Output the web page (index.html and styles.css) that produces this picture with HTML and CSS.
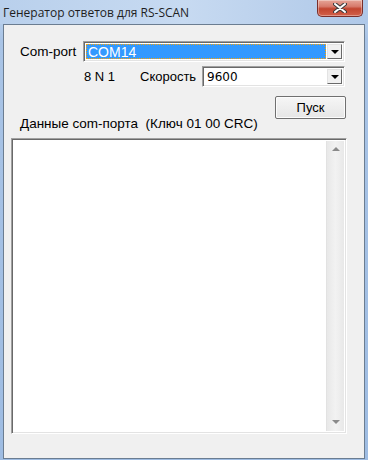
FILE: index.html
```html
<!DOCTYPE html>
<html lang="ru">
<head>
  <meta charset="UTF-8">
  <title>Генератор ответов для RS-SCAN</title>
  <link rel="stylesheet" href="styles.css">
</head>
<body>
  <div class="window">
    <div class="titlebar">
      <span class="title">Генератор ответов для RS-SCAN</span>
      <button class="close-btn">
        <svg width="14" height="10" viewBox="0 0 14 10">
          <path d="M2 1 L12 9 M12 1 L2 9" stroke="#3b3b3b" stroke-width="4" stroke-linecap="round"/>
          <path d="M2 1 L12 9 M12 1 L2 9" stroke="#fff" stroke-width="2" stroke-linecap="round"/>
        </svg>
      </button>
    </div>

    <div class="client">
      <div class="row row-port">
        <span class="label">Com-port</span>
        <div class="combo combo-port">
          <div class="combo-value selected"><span>COM14</span></div>
          <div class="combo-arrow"><span class="tri"></span></div>
        </div>
      </div>

      <div class="row row-speed">
        <span class="parity">8 N 1</span>
        <span class="speed-label">Скорость</span>
        <div class="combo combo-speed">
          <div class="combo-value"><span>9600</span></div>
          <div class="combo-arrow"><span class="tri"></span></div>
        </div>
      </div>

      <div class="row row-btn">
        <button class="push">Пуск</button>
      </div>

      <div class="data-label">Данные com-порта&nbsp; (Ключ 01 00 CRC)</div>

      <div class="memo">
        <div class="memo-text"></div>
        <div class="scrollbar">
          <span class="sb-up"></span>
          <span class="sb-down"></span>
        </div>
      </div>
    </div>
  </div>
</body>
</html>
```

FILE: styles.css
```css
body {
  margin: 0;
  width: 368px;
  height: 460px;
  overflow: hidden;
  font-family: 'Liberation Sans', Arial, sans-serif;
}
.window {
  width: 368px;
  height: 460px;
  background: linear-gradient(to bottom, #c2d7ef 0px, #a9c4e6 40px, #9ebce2 460px);
  display: flex;
  flex-direction: column;
}
.titlebar {
  height: 24px;
  display: flex;
  align-items: flex-start;
  justify-content: space-between;
  background: linear-gradient(to right, #b9d0ec, #c7daf1 50%, #afc8e8);
}
.title {
  font-family: 'Open Sans', 'Noto Sans', sans-serif;
  font-size: 12px;
  color: #1e1e1e;
  margin: 4px 0 0 3px;
}
.close-btn {
  width: 46px;
  height: 17px;
  margin-right: 5px;
  padding: 0;
  border: 1px solid #7a2e2a;
  border-top: none;
  border-radius: 0 0 5px 5px;
  background: linear-gradient(to bottom, #e6a597 0%, #d77b6c 40%, #c2452f 55%, #d2604a 100%);
  box-shadow: inset 0 0 0 1px rgba(255,255,255,0.35);
  display: flex;
  align-items: center;
  justify-content: center;
}
.client {
  margin: 0 3px 1px 3px;
  flex: 1;
  background: #f0f0f0;
  border: 1px solid #6b7d91;
  padding: 16px 0 0 0;
  font-size: 13px;
  color: #000;
}
.row {
  display: flex;
  align-items: center;
}
.label {
  width: 63px;
  padding-left: 16px;
  font-size: 13.5px;
}
.combo {
  display: flex;
  height: 21px;
  box-sizing: border-box;
  background: #fff;
  border-top: 1px solid #a0a0a0;
  border-left: 1px solid #a0a0a0;
  border-right: 1px solid #fff;
  border-bottom: 1px solid #fff;
  box-shadow: inset 1px 1px 0 #696969, inset -1px -1px 0 #e3e3e3;
  padding: 2px;
}
.combo-port {
  width: 262px;
}
.combo-speed {
  width: 143px;
}
.combo-value {
  flex: 1;
  display: flex;
  align-items: center;
  font-family: 'DejaVu Sans', sans-serif;
  font-size: 12px;
  padding-left: 2px;
  margin-right: 1px;
}
.combo-value.selected {
  background: #3399ff;
  color: #fff;
  outline: 1px dotted #ffa500;
  outline-offset: -1px;
  font-family: 'Liberation Sans', Arial, sans-serif;
  font-size: 14px;
}
.combo-arrow {
  width: 15px;
  background: #f0f0f0;
  box-sizing: border-box;
  border-top: 1px solid #e3e3e3;
  border-left: 1px solid #e3e3e3;
  border-right: 1px solid #696969;
  border-bottom: 1px solid #696969;
  display: flex;
  align-items: center;
  justify-content: center;
}
.tri {
  width: 0;
  height: 0;
  border-left: 4px solid transparent;
  border-right: 4px solid transparent;
  border-top: 4px solid #000;
  margin-top: 1px;
}
.row-port {
  height: 21px;
}
.row-speed {
  margin-top: 4px;
  height: 21px;
}
.parity {
  padding-left: 80px;
  width: 56px;
}
.speed-label {
  width: 62px;
}
.row-btn {
  justify-content: flex-end;
  margin-top: 9px;
  padding-right: 18px;
}
.push {
  width: 71px;
  height: 23px;
  font-family: 'Liberation Sans', Arial, sans-serif;
  font-size: 13px;
  background: linear-gradient(to bottom, #f6f6f6, #e6e6e6);
  border: 1px solid #707070;
  border-radius: 2px;
  box-shadow: inset 0 0 0 1px #fcfcfc;
  padding: 0;
  color: #000;
}
.data-label {
  padding-left: 16px;
  margin-top: -2px;
  line-height: 14px;
  font-size: 13.5px;
}
.memo {
  margin: 7px 0 0 7px;
  width: 336px;
  height: 296px;
  box-sizing: border-box;
  background: #fff;
  border-top: 1px solid #a0a0a0;
  border-left: 1px solid #a0a0a0;
  border-right: 1px solid #fff;
  border-bottom: 1px solid #fff;
  box-shadow: inset 1px 1px 0 #696969, inset -1px -1px 0 #e3e3e3;
  display: flex;
  padding: 2px 2px 2px 2px;
}
.memo-text {
  flex: 1;
}
.scrollbar {
  width: 17px;
  background: linear-gradient(to right, #e8e8e8, #f2f2f2 50%, #e8e8e8);
  border-left: 1px solid #e2e2e2;
  display: flex;
  flex-direction: column;
  justify-content: space-between;
  align-items: center;
  padding: 6px 0 7px 0;
}
.sb-up {
  width: 0;
  height: 0;
  border-left: 4px solid transparent;
  border-right: 4px solid transparent;
  border-bottom: 4px solid #8a8a8a;
}
.sb-down {
  width: 0;
  height: 0;
  border-left: 4px solid transparent;
  border-right: 4px solid transparent;
  border-top: 4px solid #8a8a8a;
}
```
